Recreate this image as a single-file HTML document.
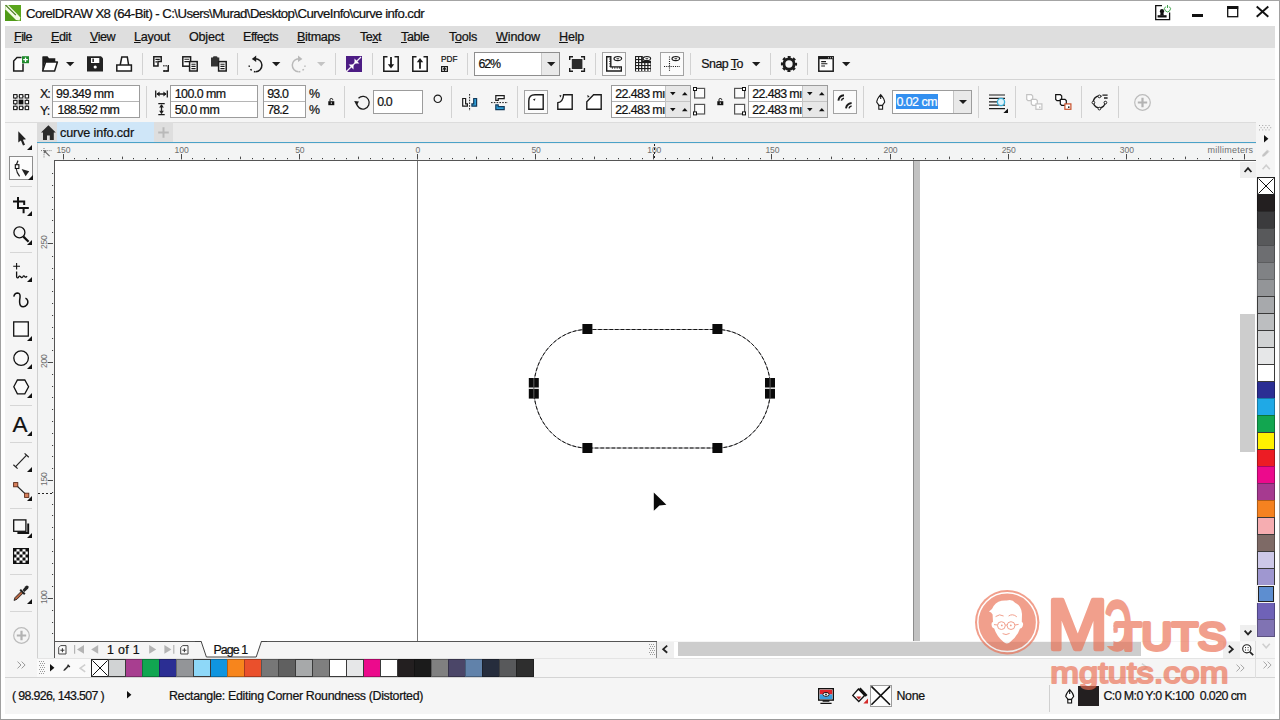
<!DOCTYPE html>
<html lang="en"><head><meta charset="utf-8"><title>CorelDRAW X8 (64-Bit) - curve info.cdr</title>
<style>
html,body{margin:0;padding:0;}
body{width:1280px;height:720px;overflow:hidden;background:#fff;position:relative;font-family:"Liberation Sans",sans-serif;}
.a{position:absolute;box-sizing:border-box;}
.t{white-space:pre;line-height:1.2;-webkit-text-stroke:0.22px currentColor;}
u{text-decoration:underline;text-underline-offset:1px;}
svg{overflow:visible;}
</style></head><body>
<div class="a" style="left:0px;top:0px;width:1280px;height:720px;background:#fff;border:1px solid #a0a0a0;"></div><div class="a" style="left:0px;top:0px;width:1280px;height:1.3px;background:#a4a4a4;"></div><div class="a" style="left:0px;top:718.5px;width:1280px;height:1.5px;background:#9a9a9a;"></div><svg class="a" style="left:5px;top:5px;" width="16" height="16" viewBox="0 0 16 16"><rect width="16" height="16" fill="#5aa51c"/>
<path d="M0 5.5 L0 16 L13.5 16 Z" fill="#4f9a17"/>
<path d="M0.3 0.3 L3.5 0.3 L15.4 12.2 L14.6 15.4 L11 15 L0.3 4.2 Z" fill="#f3fae6"/>
<path d="M0.6 0.2 L10.8 10.2" stroke="#3c6f14" stroke-width="1.1" fill="none"/>
<path d="M5 0 L16 0 L16 12.5 L15.2 12 Z" fill="#5aa51c"/></svg><span class="a t" style="left:26px;top:5.5px;font-size:13.2px;color:#111;letter-spacing:-0.560px;">CorelDRAW X8 (64-Bit) - C:\Users\Murad\Desktop\CurveInfo\curve info.cdr</span><div class="a" style="left:5px;top:26px;width:1270px;height:22px;background:#dedede;"></div><span class="a t" style="left:14px;top:30.1px;font-size:12.6px;color:#111;letter-spacing:-0.578px;"><u>F</u>ile</span><span class="a t" style="left:51px;top:30.1px;font-size:12.6px;color:#111;letter-spacing:-0.430px;"><u>E</u>dit</span><span class="a t" style="left:90px;top:30.1px;font-size:12.6px;color:#111;letter-spacing:-0.523px;"><u>V</u>iew</span><span class="a t" style="left:134px;top:30.1px;font-size:12.6px;color:#111;letter-spacing:-0.305px;"><u>L</u>ayout</span><span class="a t" style="left:189px;top:30.1px;font-size:12.6px;color:#111;letter-spacing:-0.240px;">Ob<u>j</u>ect</span><span class="a t" style="left:243px;top:30.1px;font-size:12.6px;color:#111;letter-spacing:-0.469px;">Effe<u>c</u>ts</span><span class="a t" style="left:297px;top:30.1px;font-size:12.6px;color:#111;letter-spacing:-0.357px;"><u>B</u>itmaps</span><span class="a t" style="left:360px;top:30.1px;font-size:12.6px;color:#111;letter-spacing:-0.527px;">Te<u>x</u>t</span><span class="a t" style="left:401px;top:30.1px;font-size:12.6px;color:#111;letter-spacing:-0.422px;"><u>T</u>able</span><span class="a t" style="left:449px;top:30.1px;font-size:12.6px;color:#111;letter-spacing:-0.284px;">T<u>o</u>ols</span><span class="a t" style="left:496px;top:30.1px;font-size:12.6px;color:#111;letter-spacing:-0.133px;"><u>W</u>indow</span><span class="a t" style="left:559px;top:30.1px;font-size:12.6px;color:#111;letter-spacing:-0.230px;"><u>H</u>elp</span><div class="a" style="left:5px;top:48px;width:1270px;height:32px;background:#f5f5f5;"></div><div class="a" style="left:5px;top:79px;width:1270px;height:1px;background:#d4d4d4;"></div><div class="a" style="left:5px;top:80px;width:1270px;height:42px;background:#f5f5f5;"></div><div class="a" style="left:5px;top:122px;width:1270px;height:22px;background:#ebebeb;"></div><div class="a" style="left:5px;top:122px;width:1270px;height:1px;background:#dcdcdc;"></div><div class="a" style="left:5px;top:123px;width:33px;height:555px;background:#f5f5f5;"></div><div class="a" style="left:37px;top:123px;width:1px;height:555px;background:#d0d0d0;"></div><div class="a" style="left:56.5px;top:122.4px;width:97px;height:20px;background:#cfe6f8;"></div><div class="a" style="left:153.5px;top:122.4px;width:19px;height:20px;background:#dedede;"></div><div class="a" style="left:37px;top:142px;width:1219px;height:1.3px;background:#4aa2c8;"></div><span class="a t" style="left:60px;top:125.9px;font-size:12.6px;color:#111;letter-spacing:-0.114px;">curve info.cdr</span><div class="a" style="left:38px;top:143.5px;width:1218.3px;height:16.5px;background:#f3f4f4;"></div><div class="a" style="left:38px;top:160px;width:16px;height:481px;background:#f3f4f4;"></div><div class="a" style="left:54px;top:160px;width:1202.3px;height:1px;background:#555;"></div><div class="a" style="left:54px;top:160px;width:1px;height:498px;background:#555;"></div><div class="a" style="left:55px;top:161px;width:1200px;height:480px;background:#fff;"></div><div class="a" style="left:417px;top:161px;width:1px;height:480px;background:#777;"></div><div class="a" style="left:913px;top:161px;width:7px;height:480px;background:#c2c2c2;"></div><div class="a" style="left:913px;top:161px;width:1px;height:480px;background:#8c8c8c;"></div><div class="a" style="left:1256.3px;top:122px;width:18.7px;height:556px;background:#f5f5f5;"></div><div class="a" style="left:55px;top:641px;width:1200px;height:17px;background:#f5f5f5;"></div><div class="a" style="left:54px;top:641px;width:603px;height:1px;background:#555;"></div><div class="a" style="left:38px;top:658px;width:1237px;height:19px;background:#f5f5f5;"></div><div class="a" style="left:5px;top:677px;width:1270px;height:1px;background:#d4d4d4;"></div><div class="a" style="left:5px;top:678px;width:1270px;height:36.4px;background:#f5f5f5;"></div><span class="a t" style="left:12px;top:689.4px;font-size:12.4px;color:#111;letter-spacing:-0.669px;">( 98.926, 143.507 )</span><span class="a t" style="left:169px;top:689.4px;font-size:12.4px;color:#111;letter-spacing:-0.325px;">Rectangle: Editing Corner Roundness (Distorted)</span><span class="a t" style="left:896.4px;top:689.2px;font-size:12.4px;color:#111;letter-spacing:-0.256px;">None</span><span class="a t" style="left:1103.4px;top:689.2px;font-size:12.4px;color:#111;letter-spacing:-0.577px;">C:0 M:0 Y:0 K:100  0.020 cm</span><svg class="a" style="left:12px;top:56px;" width="16" height="16" viewBox="0 0 16 16"><path d="M9.5 1.6 L5 1.6 L1.7 5 L1.7 15 L11 15 L11 7.5" fill="#fff" stroke="#1c1c1c" stroke-width="1.5"/><rect x="10" y="0.2" width="7" height="7" fill="#1f8b2c"/><path d="M13.5 1.5 V6 M11.2 3.7 H15.8" stroke="#fff" stroke-width="1.3"/></svg><svg class="a" style="left:42px;top:56px;" width="16" height="16" viewBox="0 0 16 16"><path d="M0.3 15 L0.3 1 Q0.3 0.3 1 0.3 L5.5 0.3 L7 2.3 L13.3 2.3 L13.3 6 L3 6 Z" fill="#1c1c1c"/><path d="M3.6 6 L15.4 6 L12.6 14.9 L0.6 14.9 Z" fill="#fff" stroke="#1c1c1c" stroke-width="1.5" stroke-linejoin="round"/></svg><svg class="a" style="left:66px;top:62px;" width="8.4" height="4.2" viewBox="0 0 8.4 4.2"><path d="M0 0 L8.4 0 L4.2 4.2 Z" fill="#1c1c1c"/></svg><svg class="a" style="left:87px;top:56px;" width="16" height="16" viewBox="0 0 16 16"><path d="M0 0.3 H14 L16 2.3 V15.6 H0 Z" fill="#222"/><rect x="4" y="2" width="8.3" height="5" fill="#fff"/><rect x="5.4" y="2.6" width="1.5" height="3.4" fill="#222"/><circle cx="8.2" cy="11" r="1.6" fill="#fff"/></svg><svg class="a" style="left:116px;top:56px;" width="16" height="16" viewBox="0 0 16 16"><path d="M4.2 9 L5.8 1 L11.3 1 L12.6 9" fill="#fff" stroke="#1c1c1c" stroke-width="1.5"/><rect x="0.8" y="9" width="14.6" height="6" fill="#fff" stroke="#1c1c1c" stroke-width="1.5"/></svg><div class="a" style="left:142px;top:53px;width:1px;height:22px;background:#d2d2d2;"></div><svg class="a" style="left:153px;top:56px;" width="16" height="16" viewBox="0 0 16 16"><path d="M0.8 0.8 H8.2 V5.5 H5 V10 H0.8 Z" fill="#fff" stroke="#1c1c1c" stroke-width="1.5"/><path d="M2.4 3.3 H6.8 M2.4 5.8 H4" stroke="#1c1c1c" stroke-width="1.3"/><path d="M10.3 9.8 H15.3 V15 H10.3" fill="none" stroke="#1c1c1c" stroke-width="1.4" stroke-dasharray="1.2 1"/><path d="M15.3 10 V15 H10" fill="none" stroke="#1c1c1c" stroke-width="1.4"/></svg><svg class="a" style="left:182px;top:56px;" width="16" height="16" viewBox="0 0 16 16"><rect x="0.8" y="0.8" width="7.8" height="9.4" fill="#fff" stroke="#1c1c1c" stroke-width="1.5"/><path d="M2.4 3.2 H7.2 M2.4 5.6 H7.2" stroke="#1c1c1c" stroke-width="1.1"/><rect x="7.6" y="5.6" width="7.6" height="9.4" fill="#fff" stroke="#1c1c1c" stroke-width="1.5"/><path d="M9.4 8.2 H13.6 M9.4 10.4 H13.6 M9.4 12.6 H13.6" stroke="#1c1c1c" stroke-width="1.1"/></svg><svg class="a" style="left:211px;top:56px;" width="16" height="16" viewBox="0 0 16 16"><path d="M0 1.6 H1.8 Q2 0.2 3.2 0.2 H5.2 Q6.4 0.2 6.6 1.6 H8.3 V10.4 H0 Z" fill="#333"/><rect x="7.6" y="5.6" width="7.6" height="9.4" fill="#fff" stroke="#1c1c1c" stroke-width="1.5"/><path d="M9.4 8.2 H13.6 M9.4 10.4 H13.6 M9.4 12.6 H13.6" stroke="#1c1c1c" stroke-width="1.1"/></svg><div class="a" style="left:237px;top:53px;width:1px;height:22px;background:#d2d2d2;"></div><svg class="a" style="left:247px;top:56px;" width="16" height="16" viewBox="0 0 16 16"><path d="M8.2 2.8 A6.5 6.5 0 1 1 8.6 15.8" fill="none" stroke="#1c1c1c" stroke-width="1.5"/><path d="M8.4 15.8 A6.5 6.5 0 0 1 2.2 9.4" fill="none" stroke="#1c1c1c" stroke-width="1.5" stroke-dasharray="1.6 2.4"/><path d="M4.8 3 L9.2 -0.4 L9.2 6 Z" fill="#1c1c1c"/></svg><svg class="a" style="left:272px;top:62px;" width="8.4" height="4.2" viewBox="0 0 8.4 4.2"><path d="M0 0 L8.4 0 L4.2 4.2 Z" fill="#1c1c1c"/></svg><svg class="a" style="left:291px;top:56px;" width="16" height="16" viewBox="0 0 16 16"><path d="M8 2.8 A6.5 6.5 0 1 0 7.6 15.8" fill="none" stroke="#b9b9b9" stroke-width="1.5"/><path d="M7.8 15.8 A6.5 6.5 0 0 0 14 9.4" fill="none" stroke="#b9b9b9" stroke-width="1.5" stroke-dasharray="1.6 2.4"/><path d="M11.4 3 L7 -0.4 L7 6 Z" fill="#b9b9b9"/></svg><svg class="a" style="left:317px;top:62px;" width="8.4" height="4.2" viewBox="0 0 8.4 4.2"><path d="M0 0 L8.4 0 L4.2 4.2 Z" fill="#c4c4c4"/></svg><div class="a" style="left:335px;top:53px;width:1px;height:22px;background:#d2d2d2;"></div><svg class="a" style="left:346px;top:56px;" width="16" height="16" viewBox="0 0 16 16"><path d="M0 0 H16 V16 H2 L0 14 Z" fill="#4c1c84"/><path d="M1 15 L15 1" stroke="#f0eaf6" stroke-width="1.3"/><path d="M8.5 7.5 L8.5 2.6 L13.4 7.5 Z M7.5 8.5 L2.6 8.5 L7.5 13.4 Z" fill="#fff"/></svg><div class="a" style="left:372px;top:53px;width:1px;height:22px;background:#d2d2d2;"></div><svg class="a" style="left:383px;top:56px;" width="16" height="16" viewBox="0 0 16 16"><path d="M4.5 0.8 H0.8 V15.2 H15.2 V0.8 H11.5" fill="#fff" stroke="#1c1c1c" stroke-width="1.5"/><path d="M8 1 V9.5" stroke="#1c1c1c" stroke-width="1.8"/><path d="M4.8 8.3 H11.2 L8 12.6 Z" fill="#1c1c1c"/></svg><svg class="a" style="left:412px;top:56px;" width="16" height="16" viewBox="0 0 16 16"><path d="M4.5 0.8 H0.8 V15.2 H15.2 V0.8 H11.5" fill="#fff" stroke="#1c1c1c" stroke-width="1.5"/><path d="M8 12.8 V5" stroke="#1c1c1c" stroke-width="1.8"/><path d="M4.8 6.3 H11.2 L8 2 Z" fill="#1c1c1c"/></svg><span class="a t" style="left:441px;top:55.2px;font-size:8.2px;color:#111;letter-spacing:0.042px;">PDF</span><svg class="a" style="left:441px;top:66px;" width="7" height="6" viewBox="0 0 7 6"><rect x="0.6" y="0.6" width="5.8" height="4.8" fill="#fff" stroke="#1c1c1c" stroke-width="1.2"/><path d="M3.5 5.4 V2.4 M1.8 3.6 L3.5 1.6 L5.2 3.6" stroke="#1c1c1c" stroke-width="1.1" fill="none"/></svg><div class="a" style="left:467px;top:53px;width:1px;height:22px;background:#d2d2d2;"></div><div class="a" style="left:474px;top:52px;width:86px;height:24px;background:#fff;border:1px solid #8e8e8e;"></div><div class="a" style="left:541px;top:53px;width:18px;height:22px;background:#e9e9e9;"></div><div class="a" style="left:540.5px;top:53px;width:1px;height:22px;background:#c9c9c9;"></div><svg class="a" style="left:546.8px;top:62px;" width="8.4" height="4.2" viewBox="0 0 8.4 4.2"><path d="M0 0 L8.4 0 L4.2 4.2 Z" fill="#1c1c1c"/></svg><span class="a t" style="left:478.5px;top:56.6px;font-size:12.4px;color:#111;letter-spacing:-1.104px;">62%</span><svg class="a" style="left:569px;top:56px;" width="16" height="16" viewBox="0 0 16 16"><rect x="2.8" y="3" width="10.6" height="10" fill="#2b2b2b"/><path d="M0.7 4 V0.8 H4 M12 0.8 H15.4 V4 M15.4 12 V15.3 H12 M4 15.3 H0.7 V12" fill="none" stroke="#1c1c1c" stroke-width="1.4"/></svg><div class="a" style="left:595px;top:53px;width:1px;height:22px;background:#d2d2d2;"></div><div class="a" style="left:602px;top:52px;width:24px;height:24px;background:#fbfbfb;border:1px solid #a3a3a3;"></div><svg class="a" style="left:606px;top:56px;" width="16" height="16" viewBox="0 0 16 16"><path d="M0.7 0.7 H4.8 V10.9 H15.3 V15 H0.7 Z" fill="#fff" stroke="#1c1c1c" stroke-width="1.4"/><path d="M3 3 H4.6 M3 5.4 H4.6 M3 7.8 H4.6 M3 10.2 H4.6 M6.4 12.8 V11 M8.8 12.8 V11 M11.2 12.8 V11 M13.4 12.8 V11" stroke="#1c1c1c" stroke-width="0.8"/><ellipse cx="11.8" cy="2.6" rx="3.8" ry="2.1" fill="#fff" stroke="#1c1c1c" stroke-width="1.2"/><ellipse cx="11.8" cy="2.6" rx="1.5" ry="0.9" fill="#555"/></svg><svg class="a" style="left:635px;top:56px;" width="16" height="16" viewBox="0 0 16 16"><path d="M0 0 H7.8 V4.8 H16 V15.6 H0 Z" fill="#1e1e1e"/><rect x="1.1" y="1.1" width="1.9" height="1.9" fill="#fff"/><rect x="1.1" y="4.1" width="1.9" height="1.9" fill="#fff"/><rect x="1.1" y="7.1" width="1.9" height="1.9" fill="#fff"/><rect x="1.1" y="10.1" width="1.9" height="1.9" fill="#fff"/><rect x="1.1" y="13.1" width="1.9" height="1.9" fill="#fff"/><rect x="4.2" y="1.1" width="1.9" height="1.9" fill="#fff"/><rect x="4.2" y="4.1" width="1.9" height="1.9" fill="#fff"/><rect x="4.2" y="7.1" width="1.9" height="1.9" fill="#fff"/><rect x="4.2" y="10.1" width="1.9" height="1.9" fill="#fff"/><rect x="4.2" y="13.1" width="1.9" height="1.9" fill="#fff"/><rect x="7.3" y="7.1" width="1.9" height="1.9" fill="#fff"/><rect x="7.3" y="10.1" width="1.9" height="1.9" fill="#fff"/><rect x="7.3" y="13.1" width="1.9" height="1.9" fill="#fff"/><rect x="10.4" y="7.1" width="1.9" height="1.9" fill="#fff"/><rect x="10.4" y="10.1" width="1.9" height="1.9" fill="#fff"/><rect x="10.4" y="13.1" width="1.9" height="1.9" fill="#fff"/><rect x="13.5" y="7.1" width="1.9" height="1.9" fill="#fff"/><rect x="13.5" y="10.1" width="1.9" height="1.9" fill="#fff"/><rect x="13.5" y="13.1" width="1.9" height="1.9" fill="#fff"/><ellipse cx="11.8" cy="2.6" rx="3.8" ry="2.1" fill="#fff" stroke="#1c1c1c" stroke-width="1.2"/><ellipse cx="11.8" cy="2.6" rx="1.5" ry="0.9" fill="#555"/></svg><div class="a" style="left:660px;top:52px;width:24px;height:24px;background:#fbfbfb;border:1px solid #a3a3a3;"></div><svg class="a" style="left:664px;top:56px;" width="16" height="16" viewBox="0 0 16 16"><path d="M5.5 0.5 V15.5 M0 10.5 H16" stroke="#1c1c1c" stroke-width="1.1" stroke-dasharray="1.1 1.1" fill="none"/><ellipse cx="11.8" cy="2.6" rx="3.8" ry="2.1" fill="#fff" stroke="#1c1c1c" stroke-width="1.2"/><ellipse cx="11.8" cy="2.6" rx="1.5" ry="0.9" fill="#555"/></svg><div class="a" style="left:690px;top:53px;width:1px;height:22px;background:#d2d2d2;"></div><span class="a t" style="left:701.3px;top:57.4px;font-size:12.4px;color:#111;letter-spacing:-0.538px;">Snap <u>T</u>o</span><svg class="a" style="left:751.8px;top:62px;" width="8.4" height="4.2" viewBox="0 0 8.4 4.2"><path d="M0 0 L8.4 0 L4.2 4.2 Z" fill="#1c1c1c"/></svg><div class="a" style="left:770px;top:53px;width:1px;height:22px;background:#d2d2d2;"></div><svg class="a" style="left:781px;top:56px;" width="16" height="16" viewBox="0 0 16 16"><circle cx="8" cy="8" r="5.1" fill="none" stroke="#1c1c1c" stroke-width="2.9"/><circle cx="8" cy="8" r="6.9" fill="none" stroke="#1c1c1c" stroke-width="2.4" stroke-dasharray="2.9 2.52" stroke-dashoffset="1.45"/></svg><div class="a" style="left:807px;top:53px;width:1px;height:22px;background:#d2d2d2;"></div><svg class="a" style="left:818px;top:56px;" width="16" height="16" viewBox="0 0 16 16"><rect x="0.8" y="0.8" width="14.4" height="14.4" fill="#fff" stroke="#1c1c1c" stroke-width="1.5"/><rect x="0.8" y="0.8" width="14.4" height="2.4" fill="#1c1c1c"/><path d="M10 1.8 H11 M12 1.8 H13 M14 1.8 H15" stroke="#fff" stroke-width="0.8"/><path d="M3.2 5.6 H8 M3.2 7.8 H9.4 M3.2 10 H7" stroke="#1c1c1c" stroke-width="1.1"/></svg><svg class="a" style="left:841.8px;top:62px;" width="8.4" height="4.2" viewBox="0 0 8.4 4.2"><path d="M0 0 L8.4 0 L4.2 4.2 Z" fill="#1c1c1c"/></svg><svg class="a" style="left:13px;top:94px;" width="16" height="16" viewBox="0 0 16 16"><rect x="2.3" y="2.3" width="11.6" height="11.6" fill="none" stroke="#1c1c1c" stroke-width="1.1" stroke-dasharray="1 1"/><rect x="0.6" y="0.6" width="3.4" height="3.4" fill="#fff" stroke="#1c1c1c" stroke-width="1.1"/><rect x="0.6" y="6.4" width="3.4" height="3.4" fill="#fff" stroke="#1c1c1c" stroke-width="1.1"/><rect x="0.6" y="12.2" width="3.4" height="3.4" fill="#fff" stroke="#1c1c1c" stroke-width="1.1"/><rect x="6.4" y="0.6" width="3.4" height="3.4" fill="#fff" stroke="#1c1c1c" stroke-width="1.1"/><rect x="6.4" y="12.2" width="3.4" height="3.4" fill="#fff" stroke="#1c1c1c" stroke-width="1.1"/><rect x="12.2" y="0.6" width="3.4" height="3.4" fill="#fff" stroke="#1c1c1c" stroke-width="1.1"/><rect x="12.2" y="6.4" width="3.4" height="3.4" fill="#fff" stroke="#1c1c1c" stroke-width="1.1"/><rect x="12.2" y="12.2" width="3.4" height="3.4" fill="#fff" stroke="#1c1c1c" stroke-width="1.1"/><rect x="5.6" y="5.6" width="4.8" height="4.8" fill="#111"/></svg><span class="a t" style="left:40px;top:87.3px;font-size:12.6px;color:#111;letter-spacing:-1.203px;">X:</span><span class="a t" style="left:40px;top:103.5px;font-size:12.6px;color:#111;letter-spacing:-0.859px;">Y:</span><div class="a" style="left:52px;top:85px;width:88px;height:33px;background:#fff;border:1px solid #9c9c9c;"></div><div class="a" style="left:53px;top:101px;width:86px;height:1px;background:#b5b5b5;"></div><span class="a t" style="left:56px;top:86.9px;font-size:12.4px;color:#111;letter-spacing:-0.498px;">99.349 mm</span><span class="a t" style="left:57.5px;top:103.3px;font-size:12.4px;color:#111;letter-spacing:-0.727px;">188.592 mm</span><div class="a" style="left:146px;top:86px;width:1px;height:32px;background:#d2d2d2;"></div><svg class="a" style="left:155px;top:90px;" width="13" height="8" viewBox="0 0 13 8"><path d="M0.7 0.5 V7.5 M12.3 0.5 V7.5 M2 4 H11" stroke="#1c1c1c" stroke-width="1.3" fill="none"/><path d="M1.4 4 L4.6 1.6 V6.4 Z M11.6 4 L8.4 1.6 V6.4 Z" fill="#1c1c1c"/></svg><svg class="a" style="left:158px;top:103.4px;" width="7" height="12.4" viewBox="0 0 7 12.4"><path d="M0.3 0.7 H6.7 M0.3 11.7 H6.7 M3.5 2 V10.4" stroke="#1c1c1c" stroke-width="1.3" fill="none"/><path d="M3.5 1.3 L1.1 4.6 H5.9 Z M3.5 11.1 L1.1 7.8 H5.9 Z" fill="#1c1c1c"/></svg><div class="a" style="left:170px;top:85px;width:88px;height:33px;background:#fff;border:1px solid #9c9c9c;"></div><div class="a" style="left:171px;top:101px;width:86px;height:1px;background:#b5b5b5;"></div><span class="a t" style="left:174.7px;top:86.9px;font-size:12.4px;color:#111;letter-spacing:-0.537px;">100.0 mm</span><span class="a t" style="left:174.7px;top:103.3px;font-size:12.4px;color:#111;letter-spacing:-0.529px;">50.0 mm</span><div class="a" style="left:263px;top:85px;width:43px;height:33px;background:#fff;border:1px solid #9c9c9c;"></div><div class="a" style="left:264px;top:101px;width:41px;height:1px;background:#b5b5b5;"></div><span class="a t" style="left:267.2px;top:86.9px;font-size:12.4px;color:#111;letter-spacing:-0.831px;">93.0</span><span class="a t" style="left:267.2px;top:103.3px;font-size:12.4px;color:#111;letter-spacing:-0.831px;">78.2</span><span class="a t" style="left:309px;top:86.9px;font-size:12.4px;color:#111;letter-spacing:-2.631px;">%</span><span class="a t" style="left:309px;top:103.3px;font-size:12.4px;color:#111;letter-spacing:-2.631px;">%</span><svg class="a" style="left:328.3px;top:98px;" width="7" height="7.5" viewBox="0 0 7 7.5"><rect x="0.3" y="3.2" width="6" height="4" fill="#111"/><path d="M2 3.2 V1.6 Q2 0.5 3.3 0.5 Q4.7 0.5 4.7 1.6 V2.2" fill="none" stroke="#111" stroke-width="1"/><rect x="2.8" y="4.4" width="1" height="1.4" fill="#fff"/></svg><div class="a" style="left:344px;top:86px;width:1px;height:32px;background:#d2d2d2;"></div><svg class="a" style="left:354px;top:95px;" width="17" height="15" viewBox="0 0 17 15"><path d="M2.6 8 A6.3 6.3 0 1 0 4.5 3.2" fill="none" stroke="#1c1c1c" stroke-width="1.3"/><path d="M0.2 6 L5 6.6 L2.4 10.4 Z" fill="#1c1c1c"/></svg><div class="a" style="left:373px;top:90px;width:50px;height:24px;background:#fff;border:1px solid #9c9c9c;"></div><span class="a t" style="left:377.2px;top:94.5px;font-size:12.4px;color:#111;letter-spacing:-0.845px;">0.0</span><svg class="a" style="left:432.5px;top:94px;" width="10" height="10" viewBox="0 0 10 10"><circle cx="4.8" cy="4.8" r="3.7" fill="none" stroke="#1c1c1c" stroke-width="1.2"/></svg><div class="a" style="left:451px;top:86px;width:1px;height:32px;background:#d2d2d2;"></div><svg class="a" style="left:462px;top:93.5px;" width="16" height="17" viewBox="0 0 16 17"><path d="M0.7 4.5 H3.6 V9.8 H5.4 V12.2 H0.7 Z" fill="#fff" stroke="#1c1c1c" stroke-width="1.2"/><path d="M14.6 4.5 H11.7 V9.8 H9.9 V12.2 H14.6 Z" fill="#2f9fd8" stroke="#143a5a" stroke-width="1.2"/><path d="M7.6 0 V17" stroke="#1c1c1c" stroke-width="1" stroke-dasharray="1.6 1.2"/></svg><svg class="a" style="left:490.5px;top:94.5px;" width="17" height="16" viewBox="0 0 17 16"><path d="M4.8 0.7 H13.2 V3.6 H7.2 V5.4 H4.8 Z" fill="#fff" stroke="#1c1c1c" stroke-width="1.2"/><path d="M4.8 14.6 H13.2 V11.7 H7.2 V9.9 H4.8 Z" fill="#2f9fd8" stroke="#143a5a" stroke-width="1.2"/><path d="M0 7.6 H17" stroke="#1c1c1c" stroke-width="1" stroke-dasharray="1.6 1.2"/></svg><div class="a" style="left:517px;top:86px;width:1px;height:32px;background:#d2d2d2;"></div><div class="a" style="left:524px;top:90px;width:24px;height:24px;background:#fbfbfb;border:1px solid #a3a3a3;"></div><svg class="a" style="left:528px;top:94px;" width="16" height="16" viewBox="0 0 16 16"><path d="M0.8 15.2 V7 Q0.8 0.8 7 0.8 H15.2 V15.2 Z" fill="#fff" stroke="#1c1c1c" stroke-width="1.4"/><path d="M5 5.2 L7.6 4.6 L6.4 7 Z" fill="#1c1c1c"/></svg><svg class="a" style="left:557px;top:94px;" width="16" height="16" viewBox="0 0 16 16"><path d="M0.8 15.2 V8.8 Q6 8 6.6 0.8 H15.2 V15.2 Z" fill="#fff" stroke="#1c1c1c" stroke-width="1.4"/><path d="M2.2 1.6 L4.4 1 L3.6 3.4 Z" fill="#1c1c1c"/></svg><svg class="a" style="left:586px;top:94px;" width="16" height="16" viewBox="0 0 16 16"><path d="M0.8 15.2 V7.8 L7.6 0.8 H15.2 V15.2 Z" fill="#fff" stroke="#1c1c1c" stroke-width="1.4"/><path d="M1.2 1 L3.6 2.2 L1.8 3.8 Z" fill="#1c1c1c"/></svg><div class="a" style="left:611px;top:85px;width:80px;height:33px;background:#fff;border:1px solid #9c9c9c;"></div><div class="a" style="left:612px;top:101px;width:78px;height:1px;background:#b5b5b5;"></div><div class="a" style="left:666px;top:86px;width:24px;height:31px;background:#e7e7e7;"></div><div class="a" style="left:666px;top:101px;width:24px;height:1px;background:#c4c4c4;"></div><div class="a" style="left:665px;top:86px;width:1px;height:31px;background:#c4c4c4;"></div><span class="a t" style="left:615.3px;top:86.9px;font-size:12.4px;color:#111;letter-spacing:-0.623px;">22.483 mı</span><span class="a t" style="left:615.3px;top:103.3px;font-size:12.4px;color:#111;letter-spacing:-0.623px;">22.483 mı</span><svg class="a" style="left:670.4px;top:91.9px;" width="5.6" height="3.2" viewBox="0 0 5.6 3.2"><path d="M0 0 H5.6 L2.8 3.2 Z" fill="#111"/></svg><svg class="a" style="left:682.2px;top:91.9px;" width="5.6" height="3.2" viewBox="0 0 5.6 3.2"><path d="M0 3.2 H5.6 L2.8 0 Z" fill="#111"/></svg><svg class="a" style="left:670.4px;top:107.7px;" width="5.6" height="3.2" viewBox="0 0 5.6 3.2"><path d="M0 0 H5.6 L2.8 3.2 Z" fill="#111"/></svg><svg class="a" style="left:682.2px;top:107.7px;" width="5.6" height="3.2" viewBox="0 0 5.6 3.2"><path d="M0 3.2 H5.6 L2.8 0 Z" fill="#111"/></svg><svg class="a" style="left:692.6px;top:87.3px;" width="13" height="12.4" viewBox="0 0 13 12.4"><rect x="1.6" y="1.4" width="10" height="9.6" fill="#fbfbfb" stroke="#555" stroke-width="1.2"/><rect x="0.5" y="0.5" width="3" height="3" fill="#fff" stroke="#111" stroke-width="1"/></svg><svg class="a" style="left:692.6px;top:103.2px;" width="13" height="12.4" viewBox="0 0 13 12.4"><rect x="1.6" y="1.4" width="10" height="9.6" fill="#fbfbfb" stroke="#555" stroke-width="1.2"/><rect x="0.5" y="8.9" width="3" height="3" fill="#fff" stroke="#111" stroke-width="1"/></svg><svg class="a" style="left:716.6px;top:98px;" width="7" height="7.5" viewBox="0 0 7 7.5"><rect x="0.3" y="3.2" width="6" height="4" fill="#111"/><path d="M2 3.2 V1.6 Q2 0.5 3.3 0.5 Q4.7 0.5 4.7 1.6 V2.2" fill="none" stroke="#111" stroke-width="1"/><rect x="2.8" y="4.4" width="1" height="1.4" fill="#fff"/></svg><svg class="a" style="left:733px;top:87.3px;" width="13" height="12.4" viewBox="0 0 13 12.4"><rect x="1.6" y="1.4" width="10" height="9.6" fill="#fbfbfb" stroke="#555" stroke-width="1.2"/><rect x="9.5" y="0.5" width="3" height="3" fill="#fff" stroke="#111" stroke-width="1"/></svg><svg class="a" style="left:733px;top:103.2px;" width="13" height="12.4" viewBox="0 0 13 12.4"><rect x="1.6" y="1.4" width="10" height="9.6" fill="#fbfbfb" stroke="#555" stroke-width="1.2"/><rect x="9.5" y="8.9" width="3" height="3" fill="#fff" stroke="#111" stroke-width="1"/></svg><div class="a" style="left:748px;top:85px;width:80px;height:33px;background:#fff;border:1px solid #9c9c9c;"></div><div class="a" style="left:749px;top:101px;width:78px;height:1px;background:#b5b5b5;"></div><div class="a" style="left:803px;top:86px;width:24px;height:31px;background:#e7e7e7;"></div><div class="a" style="left:803px;top:101px;width:24px;height:1px;background:#c4c4c4;"></div><div class="a" style="left:802px;top:86px;width:1px;height:31px;background:#c4c4c4;"></div><span class="a t" style="left:752.3px;top:86.9px;font-size:12.4px;color:#111;letter-spacing:-0.623px;">22.483 mı</span><span class="a t" style="left:752.3px;top:103.3px;font-size:12.4px;color:#111;letter-spacing:-0.623px;">22.483 mı</span><svg class="a" style="left:807px;top:91.9px;" width="5.6" height="3.2" viewBox="0 0 5.6 3.2"><path d="M0 0 H5.6 L2.8 3.2 Z" fill="#111"/></svg><svg class="a" style="left:818.8px;top:91.9px;" width="5.6" height="3.2" viewBox="0 0 5.6 3.2"><path d="M0 3.2 H5.6 L2.8 0 Z" fill="#111"/></svg><svg class="a" style="left:807px;top:107.7px;" width="5.6" height="3.2" viewBox="0 0 5.6 3.2"><path d="M0 0 H5.6 L2.8 3.2 Z" fill="#111"/></svg><svg class="a" style="left:818.8px;top:107.7px;" width="5.6" height="3.2" viewBox="0 0 5.6 3.2"><path d="M0 3.2 H5.6 L2.8 0 Z" fill="#111"/></svg><div class="a" style="left:833px;top:90px;width:24px;height:24px;background:#fbfbfb;border:1px solid #a3a3a3;"></div><svg class="a" style="left:837px;top:94px;" width="16" height="16" viewBox="0 0 16 16"><path d="M1.4 6.6 Q2 1.6 7 1.2" fill="none" stroke="#1c1c1c" stroke-width="1.9"/><path d="M4.4 6.6 Q4.8 4.4 7 4.2" fill="none" stroke="#1c1c1c" stroke-width="1.5"/><path d="M9 14.4 Q9.6 9.6 14.6 9" fill="none" stroke="#1c1c1c" stroke-width="1.9"/><path d="M12 14.4 Q12.4 12.2 14.6 12" fill="none" stroke="#1c1c1c" stroke-width="1.5"/></svg><div class="a" style="left:863px;top:86px;width:1px;height:32px;background:#d2d2d2;"></div><svg class="a" style="left:876px;top:94px;" width="9.4" height="16" viewBox="0 0 9.4 16"><path d="M4.7 0.4 V5 M4.7 0.6 Q1 4.6 0.7 8 L3 11.4 H6.4 L8.7 8 Q8.4 4.6 4.7 0.6 Z" fill="#fff" stroke="#1c1c1c" stroke-width="1.1"/><rect x="2.8" y="11.6" width="3.8" height="3.6" fill="#fff" stroke="#1c1c1c" stroke-width="1.1"/></svg><div class="a" style="left:892px;top:90px;width:80px;height:24px;background:#fff;border:1px solid #9c9c9c;"></div><div class="a" style="left:954px;top:91px;width:17px;height:22px;background:#e9e9e9;"></div><div class="a" style="left:953px;top:91px;width:1px;height:22px;background:#c4c4c4;"></div><div class="a" style="left:895.6px;top:94.4px;width:42.6px;height:14.6px;background:#3390f0;"></div><span class="a t" style="left:896.4px;top:95.2px;font-size:12.4px;color:#fff;letter-spacing:-0.497px;">0.02 cm</span><svg class="a" style="left:959.2px;top:100.2px;" width="8" height="4" viewBox="0 0 8 4"><path d="M0 0 L8 0 L4 4 Z" fill="#1c1c1c"/></svg><div class="a" style="left:978px;top:86px;width:1px;height:32px;background:#d2d2d2;"></div><svg class="a" style="left:989px;top:94px;" width="20" height="19" viewBox="0 0 20 19"><path d="M0 1 H16 M0 4.4 H16 M0 7.8 H16 M0 11.2 H16 M0 14.6 H16" stroke="#1c1c1c" stroke-width="1.2"/><circle cx="12" cy="8" r="3.6" fill="#dff3fb" stroke="#3bb0d8" stroke-width="1.3"/><path d="M19 14.4 V19 H14.4 Z" fill="#111"/></svg><div class="a" style="left:1015px;top:86px;width:1px;height:32px;background:#d2d2d2;"></div><svg class="a" style="left:1025.6px;top:94px;" width="17" height="16" viewBox="0 0 17 16"><path d="M0.7 0.7 H5.4 L6.7 2 V6.7 H2 L0.7 5.4 Z" fill="#fff" stroke="#c3c3c3" stroke-width="1.2"/><path d="M5.3 5.3 H10 L11.3 6.6 V11.3 H6.6 L5.3 10 Z" fill="#fff" stroke="#c3c3c3" stroke-width="1.2"/><rect x="9.9" y="9.9" width="6" height="5.4" fill="#fff" stroke="#c3c3c3" stroke-width="1.2"/><rect x="13" y="12.4" width="1.5" height="1.5" fill="#c3c3c3"/></svg><svg class="a" style="left:1055px;top:94px;" width="17" height="16" viewBox="0 0 17 16"><path d="M0.7 0.7 H5.4 L6.7 2 V6.7 H2 L0.7 5.4 Z" fill="#fff" stroke="#111" stroke-width="1.2"/><path d="M5.3 5.3 H10 L11.3 6.6 V11.3 H6.6 L5.3 10 Z" fill="#fff" stroke="#111" stroke-width="1.2"/><rect x="9.9" y="9.9" width="6" height="5.4" fill="#fff" stroke="#c8512b" stroke-width="1.2"/><rect x="13" y="12.4" width="1.5" height="1.5" fill="#111"/></svg><div class="a" style="left:1081px;top:86px;width:1px;height:32px;background:#d2d2d2;"></div><svg class="a" style="left:1092px;top:94px;" width="17" height="17" viewBox="0 0 17 17"><path d="M9.6 2.4 A6 6 0 1 0 13.3 7.6" fill="none" stroke="#1c1c1c" stroke-width="1.4"/><path d="M10.4 1.2 H15.6 M12 4 H15.6" stroke="#1c1c1c" stroke-width="1.3"/><circle cx="7.4" cy="2.4" r="1.35" fill="#fff" stroke="#1c1c1c" stroke-width="1"/><circle cx="1.4" cy="8.6" r="1.35" fill="#fff" stroke="#1c1c1c" stroke-width="1"/><circle cx="7.4" cy="14.6" r="1.35" fill="#fff" stroke="#1c1c1c" stroke-width="1"/><circle cx="13.4" cy="8.6" r="1.35" fill="#fff" stroke="#1c1c1c" stroke-width="1"/></svg><div class="a" style="left:1118px;top:86px;width:1px;height:32px;background:#d2d2d2;"></div><svg class="a" style="left:1133.5px;top:93.5px;" width="17" height="17" viewBox="0 0 17 17"><circle cx="8.5" cy="8.5" r="7.8" fill="none" stroke="#bcbcbc" stroke-width="1.2"/><path d="M8.5 3.8 V13.2 M3.8 8.5 H13.2" stroke="#b3b3b3" stroke-width="2.2"/></svg><svg class="a" style="left:1155px;top:5px;" width="16" height="15.5" viewBox="0 0 16 15.5"><path d="M7 0.7 H0.7 V14.6 H14.6 V7.5" fill="none" stroke="#111" stroke-width="1.3"/><circle cx="7" cy="6.2" r="2.1" fill="#111"/><path d="M5.6 7 H8.4 L8.8 10.4 H5.2 Z" fill="#111"/><rect x="2.6" y="10.2" width="9" height="2.3" fill="#111"/><path d="M10.7 1.6 A2.9 2.9 0 1 0 14.3 1.6" fill="none" stroke="#3fa34a" stroke-width="1"/><path d="M12.5 0 V3" stroke="#3fa34a" stroke-width="1"/></svg><div class="a" style="left:1192px;top:13.8px;width:11.3px;height:3.2px;background:#111;"></div><svg class="a" style="left:1227px;top:6px;" width="11.5" height="11.5" viewBox="0 0 11.5 11.5"><rect x="0.7" y="0.7" width="10" height="10" fill="none" stroke="#111" stroke-width="1.3"/><rect x="0.2" y="0.2" width="11" height="2.8" fill="#111"/></svg><svg class="a" style="left:1256px;top:6px;" width="13" height="11.5" viewBox="0 0 13 11.5"><path d="M0.7 0.5 L12.3 10.8 M12.3 0.5 L0.7 10.8" stroke="#111" stroke-width="1.9"/></svg><div class="a" style="left:37px;top:122.4px;width:19.5px;height:19.6px;background:#dcdcdc;"></div><svg class="a" style="left:41px;top:125px;" width="15" height="15" viewBox="0 0 15 15"><path d="M7.4 0.2 L14.8 7.6 H12.8 V15 H8.8 V10.6 H6 V15 H2 V7.6 H0 Z" fill="#2a2a2a"/></svg><svg class="a" style="left:158px;top:126.7px;" width="11" height="11" viewBox="0 0 11 11"><path d="M5.5 0.2 V10.8 M0.2 5.5 H10.8" stroke="#b9b9b9" stroke-width="2"/></svg><svg class="a" style="left:18px;top:131px;" width="8.5" height="16" viewBox="0 0 8.5 16"><path d="M0.3 0.2 V11.6 L2.9 9.4 L5 14.6 L7 13.7 L4.9 8.7 L8 8.3 Z" fill="#222"/></svg><svg class="a" style="left:27px;top:145px;" width="5" height="5" viewBox="0 0 5 5"><path d="M5 0 V5 H0 Z" fill="#111"/></svg><div class="a" style="left:9.4px;top:156.3px;width:23.4px;height:23.6px;background:#fcfcfc;border:1px solid #8d8d8d;"></div><svg class="a" style="left:14px;top:159.5px;" width="16" height="18" viewBox="0 0 16 18"><path d="M4 0.6 Q-0.4 8.5 5.6 16.4" fill="none" stroke="#222" stroke-width="1.2"/><rect x="1.3" y="4.7" width="3.6" height="3.8" fill="#fff" stroke="#111" stroke-width="1.1"/><path d="M7.6 9 L15.2 11.2 L11.6 16.2 Z" fill="#222"/></svg><svg class="a" style="left:27.5px;top:174.6px;" width="5" height="5" viewBox="0 0 5 5"><path d="M5 0 V5 H0 Z" fill="#111"/></svg><div class="a" style="left:10px;top:186px;width:22px;height:1px;background:#d6d6d6;"></div><svg class="a" style="left:13px;top:197px;" width="16" height="16.5" viewBox="0 0 16 16.5"><path d="M5 0 V9.4 M0 4.4 H11.2 V8 M15.8 11 H5 V7.6 M10.6 16.2 V11" fill="none" stroke="#111" stroke-width="2"/></svg><svg class="a" style="left:27px;top:211px;" width="5" height="5" viewBox="0 0 5 5"><path d="M5 0 V5 H0 Z" fill="#111"/></svg><svg class="a" style="left:12.5px;top:226px;" width="18" height="18" viewBox="0 0 18 18"><circle cx="6.4" cy="6.4" r="5.5" fill="none" stroke="#111" stroke-width="1.3"/><path d="M10.4 10.6 L15.6 15.8" stroke="#111" stroke-width="2.2"/></svg><svg class="a" style="left:27px;top:240.4px;" width="5" height="5" viewBox="0 0 5 5"><path d="M5 0 V5 H0 Z" fill="#111"/></svg><div class="a" style="left:10px;top:252px;width:22px;height:1px;background:#d6d6d6;"></div><svg class="a" style="left:13px;top:263px;" width="17" height="17" viewBox="0 0 17 17"><path d="M3.6 0 V6.6 M0.2 3.3 H7" stroke="#111" stroke-width="1.1"/><path d="M3.6 8.4 V13.4 Q3.8 15.6 5.4 14.4 Q6.4 12.2 7.6 13.6 Q8.6 15.4 9.8 13.8 Q10.8 12.2 11.8 13.6 Q12.8 15 14 13.2" fill="none" stroke="#111" stroke-width="1.3"/></svg><svg class="a" style="left:27px;top:277px;" width="5" height="5" viewBox="0 0 5 5"><path d="M5 0 V5 H0 Z" fill="#111"/></svg><svg class="a" style="left:13px;top:292px;" width="17" height="16" viewBox="0 0 17 16"><path d="M0.8 4.6 Q1.6 1 4.6 1 Q7.6 1.2 7 5.6 Q6 11 7.4 13.4 Q9.4 15.6 12.6 14 Q15.6 11.8 14.6 8.4 Q14 6.6 12.4 6.2" fill="none" stroke="#111" stroke-width="1.5"/></svg><svg class="a" style="left:13px;top:321px;" width="16" height="16" viewBox="0 0 16 16"><rect x="0.7" y="0.9" width="14.6" height="14.2" fill="#fafafa" stroke="#111" stroke-width="1.3"/></svg><svg class="a" style="left:27px;top:335.6px;" width="5" height="5" viewBox="0 0 5 5"><path d="M5 0 V5 H0 Z" fill="#111"/></svg><svg class="a" style="left:13px;top:350px;" width="16.4" height="16.4" viewBox="0 0 16.4 16.4"><circle cx="8.1" cy="8.1" r="7.3" fill="#fafafa" stroke="#111" stroke-width="1.3"/></svg><svg class="a" style="left:27px;top:364px;" width="5" height="5" viewBox="0 0 5 5"><path d="M5 0 V5 H0 Z" fill="#111"/></svg><svg class="a" style="left:13px;top:379px;" width="16.4" height="16" viewBox="0 0 16.4 16"><path d="M0.8 7.8 L4.4 1 H11.8 L15.6 7.8 L11.8 14.8 H4.4 Z" fill="#fafafa" stroke="#111" stroke-width="1.3"/></svg><svg class="a" style="left:27px;top:393px;" width="5" height="5" viewBox="0 0 5 5"><path d="M5 0 V5 H0 Z" fill="#111"/></svg><div class="a" style="left:10px;top:405px;width:22px;height:1px;background:#d6d6d6;"></div><span class="a t" style="left:12.6px;top:411.4px;font-size:22.5px;color:#111;letter-spacing:1.984px;">A</span><svg class="a" style="left:27px;top:431.4px;" width="5" height="5" viewBox="0 0 5 5"><path d="M5 0 V5 H0 Z" fill="#111"/></svg><div class="a" style="left:10px;top:442px;width:22px;height:1px;background:#d6d6d6;"></div><svg class="a" style="left:13px;top:453px;" width="16" height="16" viewBox="0 0 16 16"><path d="M2.6 13.6 L13.6 2.2" stroke="#222" stroke-width="1.2"/><path d="M0.4 11.8 L4.6 15.6 M11.6 0.4 L15.8 4.2" stroke="#222" stroke-width="1.2"/></svg><svg class="a" style="left:27px;top:467.4px;" width="5" height="5" viewBox="0 0 5 5"><path d="M5 0 V5 H0 Z" fill="#111"/></svg><svg class="a" style="left:13px;top:482px;" width="17" height="17" viewBox="0 0 17 17"><path d="M2.6 2.6 L13.8 13.4" stroke="#222" stroke-width="1.3"/><rect x="0.6" y="0.6" width="4.2" height="4.2" fill="#d9805c" stroke="#5a2a18" stroke-width="0.9"/><rect x="11.6" y="11.2" width="4.2" height="4.2" fill="#d9805c" stroke="#5a2a18" stroke-width="0.9"/></svg><svg class="a" style="left:27px;top:496px;" width="5" height="5" viewBox="0 0 5 5"><path d="M5 0 V5 H0 Z" fill="#111"/></svg><div class="a" style="left:10px;top:508px;width:22px;height:1px;background:#d6d6d6;"></div><svg class="a" style="left:13px;top:519px;" width="17" height="17" viewBox="0 0 17 17"><path d="M4.4 14 H15.2 V4.4" fill="none" stroke="#111" stroke-width="1.9"/><rect x="0.7" y="0.9" width="12.2" height="11.4" fill="#fafafa" stroke="#111" stroke-width="1.3"/></svg><svg class="a" style="left:27px;top:533.4px;" width="5" height="5" viewBox="0 0 5 5"><path d="M5 0 V5 H0 Z" fill="#111"/></svg><svg class="a" style="left:13px;top:548px;" width="16" height="16" viewBox="0 0 16 16"><rect x="0.6" y="0.6" width="14.8" height="14.8" fill="#fff" stroke="#111" stroke-width="1.2"/><rect x="0.5" y="0.5" width="3" height="3" fill="#111"/><rect x="0.5" y="6.5" width="3" height="3" fill="#111"/><rect x="0.5" y="12.5" width="3" height="3" fill="#111"/><rect x="3.5" y="3.5" width="3" height="3" fill="#111"/><rect x="3.5" y="9.5" width="3" height="3" fill="#111"/><rect x="6.5" y="0.5" width="3" height="3" fill="#111"/><rect x="6.5" y="6.5" width="3" height="3" fill="#111"/><rect x="6.5" y="12.5" width="3" height="3" fill="#111"/><rect x="9.5" y="3.5" width="3" height="3" fill="#111"/><rect x="9.5" y="9.5" width="3" height="3" fill="#111"/><rect x="12.5" y="0.5" width="3" height="3" fill="#111"/><rect x="12.5" y="6.5" width="3" height="3" fill="#111"/><rect x="12.5" y="12.5" width="3" height="3" fill="#111"/></svg><div class="a" style="left:10px;top:574px;width:22px;height:1px;background:#d6d6d6;"></div><svg class="a" style="left:13px;top:585px;" width="16" height="16.4" viewBox="0 0 16 16.4"><path d="M1 15.4 L2 12.6 L8.6 6 L10.4 7.8 L3.8 14.4 Z" fill="#b5633f" stroke="#222" stroke-width="0.9"/><path d="M7.2 4.6 L11.8 9.2" stroke="#222" stroke-width="2"/><path d="M9.6 5 L12.6 1.2 Q14 0 15.2 1.2 Q16.2 2.6 15 3.8 L11.4 7 Z" fill="#222"/></svg><svg class="a" style="left:27px;top:599.4px;" width="5" height="5" viewBox="0 0 5 5"><path d="M5 0 V5 H0 Z" fill="#111"/></svg><div class="a" style="left:10px;top:611px;width:22px;height:1px;background:#d6d6d6;"></div><svg class="a" style="left:13px;top:626.6px;" width="17" height="17" viewBox="0 0 17 17"><circle cx="8.5" cy="8.5" r="7.8" fill="none" stroke="#bcbcbc" stroke-width="1.2"/><path d="M8.5 3.8 V13.2 M3.8 8.5 H13.2" stroke="#b3b3b3" stroke-width="2.2"/></svg><svg class="a" style="left:16.5px;top:661.4px;" width="9" height="8" viewBox="0 0 9 8"><path d="M0.5 0.6 L4 4 L0.5 7.4 M4.6 0.6 L8.1 4 L4.6 7.4" fill="none" stroke="#9a9a9a" stroke-width="1"/></svg><svg class="a" style="left:41px;top:147.5px;" width="11" height="10" viewBox="0 0 11 10"><path d="M3 0 V10 M0 2.6 H11" stroke="#777" stroke-width="1" stroke-dasharray="1 1.1"/><path d="M3.4 3 L8.6 8.2" stroke="#666" stroke-width="1.1"/><path d="M2.6 2.2 L6 2.8 L3.2 5.6 Z" fill="#666"/></svg><svg class="a" style="left:38px;top:144px;" width="1217" height="16" viewBox="0 0 1217 16"><rect x="25" y="10" width="1" height="5.4" fill="#4a4a4a"/><rect x="36" y="14" width="1" height="1.2" fill="#3c3c3c"/><rect x="48" y="14" width="1" height="1.2" fill="#3c3c3c"/><rect x="60" y="14" width="1" height="1.2" fill="#3c3c3c"/><rect x="72" y="14" width="1" height="1.2" fill="#3c3c3c"/><rect x="84" y="12.6" width="1" height="2.6" fill="#4a4a4a"/><rect x="95" y="14" width="1" height="1.2" fill="#3c3c3c"/><rect x="107" y="14" width="1" height="1.2" fill="#3c3c3c"/><rect x="119" y="14" width="1" height="1.2" fill="#3c3c3c"/><rect x="131" y="14" width="1" height="1.2" fill="#3c3c3c"/><rect x="143" y="10" width="1" height="5.4" fill="#4a4a4a"/><rect x="154" y="14" width="1" height="1.2" fill="#3c3c3c"/><rect x="166" y="14" width="1" height="1.2" fill="#3c3c3c"/><rect x="178" y="14" width="1" height="1.2" fill="#3c3c3c"/><rect x="190" y="14" width="1" height="1.2" fill="#3c3c3c"/><rect x="202" y="12.6" width="1" height="2.6" fill="#4a4a4a"/><rect x="214" y="14" width="1" height="1.2" fill="#3c3c3c"/><rect x="225" y="14" width="1" height="1.2" fill="#3c3c3c"/><rect x="237" y="14" width="1" height="1.2" fill="#3c3c3c"/><rect x="249" y="14" width="1" height="1.2" fill="#3c3c3c"/><rect x="261" y="10" width="1" height="5.4" fill="#4a4a4a"/><rect x="273" y="14" width="1" height="1.2" fill="#3c3c3c"/><rect x="284" y="14" width="1" height="1.2" fill="#3c3c3c"/><rect x="296" y="14" width="1" height="1.2" fill="#3c3c3c"/><rect x="308" y="14" width="1" height="1.2" fill="#3c3c3c"/><rect x="320" y="12.6" width="1" height="2.6" fill="#4a4a4a"/><rect x="332" y="14" width="1" height="1.2" fill="#3c3c3c"/><rect x="344" y="14" width="1" height="1.2" fill="#3c3c3c"/><rect x="355" y="14" width="1" height="1.2" fill="#3c3c3c"/><rect x="367" y="14" width="1" height="1.2" fill="#3c3c3c"/><rect x="379" y="10" width="1" height="5.4" fill="#4a4a4a"/><rect x="391" y="14" width="1" height="1.2" fill="#3c3c3c"/><rect x="403" y="14" width="1" height="1.2" fill="#3c3c3c"/><rect x="414" y="14" width="1" height="1.2" fill="#3c3c3c"/><rect x="426" y="14" width="1" height="1.2" fill="#3c3c3c"/><rect x="438" y="12.6" width="1" height="2.6" fill="#4a4a4a"/><rect x="450" y="14" width="1" height="1.2" fill="#3c3c3c"/><rect x="462" y="14" width="1" height="1.2" fill="#3c3c3c"/><rect x="474" y="14" width="1" height="1.2" fill="#3c3c3c"/><rect x="485" y="14" width="1" height="1.2" fill="#3c3c3c"/><rect x="497" y="10" width="1" height="5.4" fill="#4a4a4a"/><rect x="509" y="14" width="1" height="1.2" fill="#3c3c3c"/><rect x="521" y="14" width="1" height="1.2" fill="#3c3c3c"/><rect x="533" y="14" width="1" height="1.2" fill="#3c3c3c"/><rect x="544" y="14" width="1" height="1.2" fill="#3c3c3c"/><rect x="556" y="12.6" width="1" height="2.6" fill="#4a4a4a"/><rect x="568" y="14" width="1" height="1.2" fill="#3c3c3c"/><rect x="580" y="14" width="1" height="1.2" fill="#3c3c3c"/><rect x="592" y="14" width="1" height="1.2" fill="#3c3c3c"/><rect x="604" y="14" width="1" height="1.2" fill="#3c3c3c"/><rect x="615" y="10" width="1" height="5.4" fill="#4a4a4a"/><rect x="627" y="14" width="1" height="1.2" fill="#3c3c3c"/><rect x="639" y="14" width="1" height="1.2" fill="#3c3c3c"/><rect x="651" y="14" width="1" height="1.2" fill="#3c3c3c"/><rect x="663" y="14" width="1" height="1.2" fill="#3c3c3c"/><rect x="674" y="12.6" width="1" height="2.6" fill="#4a4a4a"/><rect x="686" y="14" width="1" height="1.2" fill="#3c3c3c"/><rect x="698" y="14" width="1" height="1.2" fill="#3c3c3c"/><rect x="710" y="14" width="1" height="1.2" fill="#3c3c3c"/><rect x="722" y="14" width="1" height="1.2" fill="#3c3c3c"/><rect x="733" y="10" width="1" height="5.4" fill="#4a4a4a"/><rect x="745" y="14" width="1" height="1.2" fill="#3c3c3c"/><rect x="757" y="14" width="1" height="1.2" fill="#3c3c3c"/><rect x="769" y="14" width="1" height="1.2" fill="#3c3c3c"/><rect x="781" y="14" width="1" height="1.2" fill="#3c3c3c"/><rect x="793" y="12.6" width="1" height="2.6" fill="#4a4a4a"/><rect x="804" y="14" width="1" height="1.2" fill="#3c3c3c"/><rect x="816" y="14" width="1" height="1.2" fill="#3c3c3c"/><rect x="828" y="14" width="1" height="1.2" fill="#3c3c3c"/><rect x="840" y="14" width="1" height="1.2" fill="#3c3c3c"/><rect x="852" y="10" width="1" height="5.4" fill="#4a4a4a"/><rect x="863" y="14" width="1" height="1.2" fill="#3c3c3c"/><rect x="875" y="14" width="1" height="1.2" fill="#3c3c3c"/><rect x="887" y="14" width="1" height="1.2" fill="#3c3c3c"/><rect x="899" y="14" width="1" height="1.2" fill="#3c3c3c"/><rect x="911" y="12.6" width="1" height="2.6" fill="#4a4a4a"/><rect x="923" y="14" width="1" height="1.2" fill="#3c3c3c"/><rect x="934" y="14" width="1" height="1.2" fill="#3c3c3c"/><rect x="946" y="14" width="1" height="1.2" fill="#3c3c3c"/><rect x="958" y="14" width="1" height="1.2" fill="#3c3c3c"/><rect x="970" y="10" width="1" height="5.4" fill="#4a4a4a"/><rect x="982" y="14" width="1" height="1.2" fill="#3c3c3c"/><rect x="993" y="14" width="1" height="1.2" fill="#3c3c3c"/><rect x="1005" y="14" width="1" height="1.2" fill="#3c3c3c"/><rect x="1017" y="14" width="1" height="1.2" fill="#3c3c3c"/><rect x="1029" y="12.6" width="1" height="2.6" fill="#4a4a4a"/><rect x="1041" y="14" width="1" height="1.2" fill="#3c3c3c"/><rect x="1053" y="14" width="1" height="1.2" fill="#3c3c3c"/><rect x="1064" y="14" width="1" height="1.2" fill="#3c3c3c"/><rect x="1076" y="14" width="1" height="1.2" fill="#3c3c3c"/><rect x="1088" y="10" width="1" height="5.4" fill="#4a4a4a"/><rect x="1100" y="14" width="1" height="1.2" fill="#3c3c3c"/><rect x="1112" y="14" width="1" height="1.2" fill="#3c3c3c"/><rect x="1123" y="14" width="1" height="1.2" fill="#3c3c3c"/><rect x="1135" y="14" width="1" height="1.2" fill="#3c3c3c"/><rect x="1147" y="12.6" width="1" height="2.6" fill="#4a4a4a"/><rect x="1159" y="14" width="1" height="1.2" fill="#3c3c3c"/><rect x="1171" y="14" width="1" height="1.2" fill="#3c3c3c"/><rect x="1182" y="14" width="1" height="1.2" fill="#3c3c3c"/><rect x="1194" y="14" width="1" height="1.2" fill="#3c3c3c"/><rect x="1206" y="10" width="1" height="5.4" fill="#4a4a4a"/></svg><span class="a t" style="left:56.42px;top:144.6px;font-size:8.6px;color:#6e6e6e;letter-spacing:-0.115px;-webkit-text-stroke:0;">150</span><span class="a t" style="left:174.58px;top:144.6px;font-size:8.6px;color:#6e6e6e;letter-spacing:-0.115px;-webkit-text-stroke:0;">100</span><span class="a t" style="left:295.14px;top:144.6px;font-size:8.6px;color:#6e6e6e;letter-spacing:-0.181px;-webkit-text-stroke:0;">50</span><span class="a t" style="left:415.6px;top:144.6px;font-size:8.6px;color:#6e6e6e;letter-spacing:-0.181px;-webkit-text-stroke:0;">0</span><span class="a t" style="left:531.46px;top:144.6px;font-size:8.6px;color:#6e6e6e;letter-spacing:-0.181px;-webkit-text-stroke:0;">50</span><span class="a t" style="left:647.22px;top:144.6px;font-size:8.6px;color:#6e6e6e;letter-spacing:-0.115px;-webkit-text-stroke:0;">100</span><span class="a t" style="left:765.38px;top:144.6px;font-size:8.6px;color:#6e6e6e;letter-spacing:-0.115px;-webkit-text-stroke:0;">150</span><span class="a t" style="left:883.54px;top:144.6px;font-size:8.6px;color:#6e6e6e;letter-spacing:-0.115px;-webkit-text-stroke:0;">200</span><span class="a t" style="left:1001.7px;top:144.6px;font-size:8.6px;color:#6e6e6e;letter-spacing:-0.115px;-webkit-text-stroke:0;">250</span><span class="a t" style="left:1119.86px;top:144.6px;font-size:8.6px;color:#6e6e6e;letter-spacing:-0.115px;-webkit-text-stroke:0;">300</span><span class="a t" style="left:1207.4px;top:144.8px;font-size:9px;color:#6e6e6e;letter-spacing:0.271px;-webkit-text-stroke:0;">millimeters</span><svg class="a" style="left:653.5px;top:144px;" width="1" height="16" viewBox="0 0 1 16"><path d="M0.5 0 V16" stroke="#222" stroke-width="1" stroke-dasharray="2 2"/></svg><svg class="a" style="left:38px;top:160px;" width="16" height="498" viewBox="0 0 16 498"><rect x="14" y="13" width="1.1" height="1" fill="#3c3c3c"/><rect x="14" y="25" width="1.1" height="1" fill="#3c3c3c"/><rect x="14" y="37" width="1.1" height="1" fill="#3c3c3c"/><rect x="14" y="49" width="1.1" height="1" fill="#3c3c3c"/><rect x="14" y="60" width="1.1" height="1" fill="#3c3c3c"/><rect x="14" y="72" width="1.1" height="1" fill="#3c3c3c"/><rect x="9.6" y="83" width="5.4" height="1" fill="#4a4a4a"/><rect x="14" y="96" width="1.1" height="1" fill="#3c3c3c"/><rect x="14" y="108" width="1.1" height="1" fill="#3c3c3c"/><rect x="14" y="119" width="1.1" height="1" fill="#3c3c3c"/><rect x="14" y="131" width="1.1" height="1" fill="#3c3c3c"/><rect x="14" y="143" width="1.1" height="1" fill="#3c3c3c"/><rect x="14" y="155" width="1.1" height="1" fill="#3c3c3c"/><rect x="14" y="167" width="1.1" height="1" fill="#3c3c3c"/><rect x="14" y="178" width="1.1" height="1" fill="#3c3c3c"/><rect x="14" y="190" width="1.1" height="1" fill="#3c3c3c"/><rect x="9.6" y="202" width="5.4" height="1" fill="#4a4a4a"/><rect x="14" y="214" width="1.1" height="1" fill="#3c3c3c"/><rect x="14" y="226" width="1.1" height="1" fill="#3c3c3c"/><rect x="14" y="237" width="1.1" height="1" fill="#3c3c3c"/><rect x="14" y="249" width="1.1" height="1" fill="#3c3c3c"/><rect x="14" y="261" width="1.1" height="1" fill="#3c3c3c"/><rect x="14" y="273" width="1.1" height="1" fill="#3c3c3c"/><rect x="14" y="285" width="1.1" height="1" fill="#3c3c3c"/><rect x="14" y="296" width="1.1" height="1" fill="#3c3c3c"/><rect x="14" y="308" width="1.1" height="1" fill="#3c3c3c"/><rect x="9.6" y="320" width="5.4" height="1" fill="#4a4a4a"/><rect x="14" y="332" width="1.1" height="1" fill="#3c3c3c"/><rect x="14" y="344" width="1.1" height="1" fill="#3c3c3c"/><rect x="14" y="355" width="1.1" height="1" fill="#3c3c3c"/><rect x="14" y="367" width="1.1" height="1" fill="#3c3c3c"/><rect x="14" y="379" width="1.1" height="1" fill="#3c3c3c"/><rect x="14" y="391" width="1.1" height="1" fill="#3c3c3c"/><rect x="14" y="403" width="1.1" height="1" fill="#3c3c3c"/><rect x="14" y="414" width="1.1" height="1" fill="#3c3c3c"/><rect x="14" y="426" width="1.1" height="1" fill="#3c3c3c"/><rect x="9.6" y="438" width="5.4" height="1" fill="#4a4a4a"/><rect x="14" y="450" width="1.1" height="1" fill="#3c3c3c"/><rect x="14" y="462" width="1.1" height="1" fill="#3c3c3c"/><rect x="14" y="473" width="1.1" height="1" fill="#3c3c3c"/><rect x="14" y="485" width="1.1" height="1" fill="#3c3c3c"/></svg><span class="a t" style="left:38.6px;top:249.1px;font-size:8.6px;color:#6e6e6e;letter-spacing:-0.315px;transform-origin:0 0;transform:rotate(-90deg);-webkit-text-stroke:0;">250</span><span class="a t" style="left:38.6px;top:368.1px;font-size:8.6px;color:#6e6e6e;letter-spacing:-0.315px;transform-origin:0 0;transform:rotate(-90deg);-webkit-text-stroke:0;">200</span><span class="a t" style="left:38.6px;top:486.1px;font-size:8.6px;color:#6e6e6e;letter-spacing:-0.315px;transform-origin:0 0;transform:rotate(-90deg);-webkit-text-stroke:0;">150</span><span class="a t" style="left:38.6px;top:604.1px;font-size:8.6px;color:#6e6e6e;letter-spacing:-0.315px;transform-origin:0 0;transform:rotate(-90deg);-webkit-text-stroke:0;">100</span><svg class="a" style="left:38px;top:492.6px;" width="16" height="1" viewBox="0 0 16 1"><path d="M0 0.5 H16" stroke="#222" stroke-width="1" stroke-dasharray="2 2"/></svg><svg class="a" style="left:0px;top:0px;" width="1280" height="720" viewBox="0 0 1280 720"><path d="M587 329.5 H717 C746.5 329.5 770.5 356 770.5 388.5 C770.5 421.5 746.5 448 717 448 H587 C557.5 448 533.8 421.5 533.8 388.5 C533.8 356 557.5 329.5 587 329.5 Z" fill="none" stroke="#8c8c90" stroke-width="1" /><path d="M587 329.5 H717 C746.5 329.5 770.5 356 770.5 388.5 C770.5 421.5 746.5 448 717 448 H587 C557.5 448 533.8 421.5 533.8 388.5 C533.8 356 557.5 329.5 587 329.5 Z" fill="none" stroke="#161616" stroke-width="1" stroke-dasharray="3.6 2"/><rect x="582.4" y="324" width="10" height="10" fill="#0a0a0a"/><rect x="712.4" y="324" width="10" height="10" fill="#0a0a0a"/><rect x="582.4" y="443" width="10" height="10" fill="#0a0a0a"/><rect x="712.4" y="443" width="10" height="10" fill="#0a0a0a"/><rect x="528.8" y="378" width="10" height="9.7" fill="#0a0a0a"/><rect x="528.8" y="388.7" width="10" height="9.9" fill="#0a0a0a"/><rect x="528.8" y="387.7" width="10" height="1" fill="#e8e8e8"/><rect x="533.4" y="378" width="0.9" height="20.6" fill="#6a6a6a"/><rect x="765" y="378" width="10" height="9.7" fill="#0a0a0a"/><rect x="765" y="388.7" width="10" height="9.9" fill="#0a0a0a"/><rect x="765" y="387.7" width="10" height="1" fill="#e8e8e8"/><rect x="769.6" y="378" width="0.9" height="20.6" fill="#6a6a6a"/></svg><svg class="a" style="left:653px;top:492px;" width="14" height="19" viewBox="0 0 14 19"><path d="M0.8 0.4 L13.4 12.8 L6.4 13.6 L0.8 18.8 Z" fill="#0a0a0a"/></svg><div class="a" style="left:1240px;top:161px;width:15.5px;height:480px;background:#fff;"></div><div class="a" style="left:1240px;top:162px;width:16px;height:16px;background:#efefef;"></div><svg class="a" style="left:1243.6px;top:167px;" width="8" height="5.6" viewBox="0 0 8 5.6"><path d="M0.6 5 L4 1.2 L7.4 5" fill="none" stroke="#222" stroke-width="1.8"/></svg><div class="a" style="left:1240px;top:314.4px;width:15.4px;height:138px;background:#cdcdcd;"></div><div class="a" style="left:1240px;top:625px;width:16px;height:16px;background:#efefef;"></div><svg class="a" style="left:1243.6px;top:630.4px;" width="8" height="5.6" viewBox="0 0 8 5.6"><path d="M0.6 0.6 L4 4.4 L7.4 0.6" fill="none" stroke="#222" stroke-width="1.8"/></svg><svg class="a" style="left:1259.4px;top:125px;" width="14" height="6" viewBox="0 0 14 6"><rect x="0" y="0" width="1" height="1" fill="#a2a2a2"/><rect x="1.6" y="2.2" width="1" height="1" fill="#a2a2a2"/><rect x="0" y="4.4" width="1" height="1" fill="#a2a2a2"/><rect x="3.2" y="0" width="1" height="1" fill="#a2a2a2"/><rect x="4.8" y="2.2" width="1" height="1" fill="#a2a2a2"/><rect x="3.2" y="4.4" width="1" height="1" fill="#a2a2a2"/><rect x="6.4" y="0" width="1" height="1" fill="#a2a2a2"/><rect x="8" y="2.2" width="1" height="1" fill="#a2a2a2"/><rect x="6.4" y="4.4" width="1" height="1" fill="#a2a2a2"/><rect x="9.6" y="0" width="1" height="1" fill="#a2a2a2"/><rect x="11.2" y="2.2" width="1" height="1" fill="#a2a2a2"/><rect x="9.6" y="4.4" width="1" height="1" fill="#a2a2a2"/></svg><svg class="a" style="left:1264px;top:134.6px;" width="4.4" height="7.6" viewBox="0 0 4.4 7.6"><path d="M0 0 V7.6 L4.4 3.8 Z" fill="#111"/></svg><svg class="a" style="left:1262px;top:149px;" width="8" height="8" viewBox="0 0 8 8"><path d="M0.6 7.2 L1 5.6 L5 1.6 L6.4 3 L2.4 7 Z M5.2 0.8 L7.2 2.8" fill="#c4c4c4" stroke="#c4c4c4" stroke-width="0.8"/></svg><svg class="a" style="left:1262px;top:164px;" width="8.4" height="6" viewBox="0 0 8.4 6"><path d="M0.6 5.2 L4.2 1.2 L7.8 5.2" fill="none" stroke="#cfcfcf" stroke-width="1.6"/></svg><svg class="a" style="left:1262px;top:643px;" width="8.4" height="6" viewBox="0 0 8.4 6"><path d="M0.6 0.8 L4.2 4.8 L7.8 0.8" fill="none" stroke="#cfcfcf" stroke-width="1.6"/></svg><svg class="a" style="left:1263px;top:661px;" width="9" height="8" viewBox="0 0 9 8"><path d="M0.5 0.6 L4 4 L0.5 7.4 M4.6 0.6 L8.1 4 L4.6 7.4" fill="none" stroke="#a8a8a8" stroke-width="1"/></svg><div class="a" style="left:1257px;top:177px;width:18px;height:460px;background:#3a3a3a;"></div><div class="a" style="left:1257px;top:194px;width:18px;height:18px;background:#191617;"></div><div class="a" style="left:1258px;top:195px;width:16px;height:16px;background:#231f20;"></div><div class="a" style="left:1257px;top:211px;width:18px;height:18px;background:#2a2a2b;"></div><div class="a" style="left:1258px;top:212px;width:16px;height:16px;background:#3b3b3d;"></div><div class="a" style="left:1257px;top:228px;width:18px;height:18px;background:#3f4041;"></div><div class="a" style="left:1258px;top:229px;width:16px;height:16px;background:#58595b;"></div><div class="a" style="left:1257px;top:245px;width:18px;height:18px;background:#4e4f51;"></div><div class="a" style="left:1258px;top:246px;width:16px;height:16px;background:#6d6e71;"></div><div class="a" style="left:1257px;top:262px;width:18px;height:18px;background:#5c5d5f;"></div><div class="a" style="left:1258px;top:263px;width:16px;height:16px;background:#808285;"></div><div class="a" style="left:1257px;top:279px;width:18px;height:18px;background:#696b6d;"></div><div class="a" style="left:1258px;top:280px;width:16px;height:16px;background:#939598;"></div><div class="a" style="left:1257px;top:381px;width:18px;height:18px;background:#1e2169;"></div><div class="a" style="left:1258px;top:382px;width:16px;height:16px;background:#2b2e93;"></div><div class="a" style="left:1257px;top:398px;width:18px;height:18px;background:#1679a5;"></div><div class="a" style="left:1258px;top:399px;width:16px;height:16px;background:#1fa9e6;"></div><div class="a" style="left:1257px;top:415px;width:18px;height:18px;background:#0c7739;"></div><div class="a" style="left:1258px;top:416px;width:16px;height:16px;background:#12a650;"></div><div class="a" style="left:1257px;top:449px;width:18px;height:18px;background:#a91419;"></div><div class="a" style="left:1258px;top:450px;width:16px;height:16px;background:#ec1c24;"></div><div class="a" style="left:1257px;top:466px;width:18px;height:18px;background:#a90764;"></div><div class="a" style="left:1258px;top:467px;width:16px;height:16px;background:#ec0a8c;"></div><div class="a" style="left:1257px;top:483px;width:18px;height:18px;background:#772967;"></div><div class="a" style="left:1258px;top:484px;width:16px;height:16px;background:#a63a90;"></div><div class="a" style="left:1257px;top:500px;width:18px;height:18px;background:#b05d17;"></div><div class="a" style="left:1258px;top:501px;width:16px;height:16px;background:#f58220;"></div><div class="a" style="left:1257px;top:534px;width:18px;height:18px;background:#5a4c49;"></div><div class="a" style="left:1258px;top:535px;width:16px;height:16px;background:#7e6a66;"></div><div class="a" style="left:1257px;top:585px;width:18px;height:18px;background:#426695;"></div><div class="a" style="left:1258px;top:586px;width:16px;height:16px;background:#5d8ed0;"></div><div class="a" style="left:1257px;top:602px;width:18px;height:18px;background:#4f4683;"></div><div class="a" style="left:1258px;top:603px;width:16px;height:16px;background:#6f62b7;"></div><div class="a" style="left:1257px;top:619px;width:18px;height:18px;background:#5c5280;"></div><div class="a" style="left:1258px;top:620px;width:16px;height:16px;background:#8073b3;"></div><div class="a" style="left:1257px;top:177px;width:18px;height:18px;background:#222;"></div><div class="a" style="left:1258px;top:178px;width:16px;height:16px;background:#fff;"></div><svg class="a" style="left:1258px;top:178px;" width="16" height="16" viewBox="0 0 16 16"><path d="M0.5 0.5 L15.5 15.5 M15.5 0.5 L0.5 15.5" stroke="#111" stroke-width="1"/></svg><div class="a" style="left:1257px;top:296px;width:18px;height:18px;background:#3a3a3a;"></div><div class="a" style="left:1258px;top:297px;width:16px;height:16px;background:#a7a9ac;"></div><div class="a" style="left:1257px;top:313px;width:18px;height:18px;background:#3a3a3a;"></div><div class="a" style="left:1258px;top:314px;width:16px;height:16px;background:#bcbec0;"></div><div class="a" style="left:1257px;top:330px;width:18px;height:18px;background:#3a3a3a;"></div><div class="a" style="left:1258px;top:331px;width:16px;height:16px;background:#d1d3d4;"></div><div class="a" style="left:1257px;top:347px;width:18px;height:18px;background:#3a3a3a;"></div><div class="a" style="left:1258px;top:348px;width:16px;height:16px;background:#e6e7e8;"></div><div class="a" style="left:1257px;top:364px;width:18px;height:18px;background:#3a3a3a;"></div><div class="a" style="left:1258px;top:365px;width:16px;height:16px;background:#ffffff;"></div><div class="a" style="left:1257px;top:432px;width:18px;height:18px;background:#3a3a3a;"></div><div class="a" style="left:1258px;top:433px;width:16px;height:16px;background:#fff100;"></div><div class="a" style="left:1257px;top:517px;width:18px;height:18px;background:#3a3a3a;"></div><div class="a" style="left:1258px;top:518px;width:16px;height:16px;background:#f6adb1;"></div><div class="a" style="left:1257px;top:551px;width:18px;height:18px;background:#3a3a3a;"></div><div class="a" style="left:1258px;top:552px;width:16px;height:16px;background:#cdc8e8;"></div><div class="a" style="left:1257px;top:568px;width:18px;height:18px;background:#3a3a3a;"></div><div class="a" style="left:1258px;top:569px;width:16px;height:16px;background:#9f97d0;"></div><div class="a" style="left:1256.6px;top:585.4px;width:18.8px;height:17.6px;border:1.4px solid #f4f4f4;outline:1px solid #222;outline-offset:-2.6px;"></div><div class="a" style="left:38px;top:641px;width:16px;height:17px;background:#f3f4f4;"></div><svg class="a" style="left:58px;top:645.4px;" width="9" height="9.6" viewBox="0 0 9 9.6"><path d="M2.6 0.6 H8 V9 H0.7 V2.6 Z" fill="#fcfcfc" stroke="#444" stroke-width="1"/><path d="M4.4 3.2 V7.2 M2.4 5.2 H6.4" stroke="#333" stroke-width="1"/></svg><svg class="a" style="left:74px;top:645.4px;" width="10.4" height="8.8" viewBox="0 0 10.4 8.8"><path d="M0.6 0 V8.8" stroke="#b4b4b4" stroke-width="1.2"/><path d="M10 0 V8.8 L3 4.4 Z" fill="#b4b4b4"/></svg><svg class="a" style="left:91.4px;top:645.4px;" width="7.4" height="8.8" viewBox="0 0 7.4 8.8"><path d="M7.2 0 V8.8 L0.2 4.4 Z" fill="#b4b4b4"/></svg><span class="a t" style="left:107px;top:643.2px;font-size:12.4px;color:#111;letter-spacing:0.331px;">1 of 1</span><svg class="a" style="left:149px;top:645.4px;" width="7.4" height="8.8" viewBox="0 0 7.4 8.8"><path d="M0.2 0 V8.8 L7.2 4.4 Z" fill="#b4b4b4"/></svg><svg class="a" style="left:163.6px;top:645.4px;" width="10.4" height="8.8" viewBox="0 0 10.4 8.8"><path d="M9.8 0 V8.8" stroke="#b4b4b4" stroke-width="1.2"/><path d="M0.4 0 V8.8 L7.4 4.4 Z" fill="#b4b4b4"/></svg><svg class="a" style="left:180.4px;top:645.4px;" width="9" height="9.6" viewBox="0 0 9 9.6"><path d="M2.6 0.6 H8 V9 H0.7 V2.6 Z" fill="#fcfcfc" stroke="#444" stroke-width="1"/><path d="M4.4 3.2 V7.2 M2.4 5.2 H6.4" stroke="#333" stroke-width="1"/></svg><svg class="a" style="left:195px;top:640px;" width="72" height="19" viewBox="0 0 72 19"><path d="M0 1.5 H6.2 L11.4 17 H61.2 L66.4 1.5 H72" fill="#fff" stroke="#444" stroke-width="1"/><rect x="6.8" y="0" width="59" height="2" fill="#fff"/></svg><span class="a t" style="left:213.5px;top:642.6px;font-size:12.4px;color:#111;letter-spacing:-0.914px;">Page 1</span><svg class="a" style="left:648.6px;top:644px;" width="6" height="12" viewBox="0 0 6 12"><rect x="0" y="0" width="1" height="1" fill="#9a9a9a"/><rect x="1" y="2" width="1" height="1" fill="#9a9a9a"/><rect x="0" y="4" width="1" height="1" fill="#9a9a9a"/><rect x="1" y="6" width="1" height="1" fill="#9a9a9a"/><rect x="0" y="8" width="1" height="1" fill="#9a9a9a"/><rect x="1" y="10" width="1" height="1" fill="#9a9a9a"/><rect x="2" y="0" width="1" height="1" fill="#9a9a9a"/><rect x="3" y="2" width="1" height="1" fill="#9a9a9a"/><rect x="2" y="4" width="1" height="1" fill="#9a9a9a"/><rect x="3" y="6" width="1" height="1" fill="#9a9a9a"/><rect x="2" y="8" width="1" height="1" fill="#9a9a9a"/><rect x="3" y="10" width="1" height="1" fill="#9a9a9a"/><rect x="4" y="0" width="1" height="1" fill="#9a9a9a"/><rect x="5" y="2" width="1" height="1" fill="#9a9a9a"/><rect x="4" y="4" width="1" height="1" fill="#9a9a9a"/><rect x="5" y="6" width="1" height="1" fill="#9a9a9a"/><rect x="4" y="8" width="1" height="1" fill="#9a9a9a"/><rect x="5" y="10" width="1" height="1" fill="#9a9a9a"/></svg><div class="a" style="left:656px;top:642px;width:1px;height:16px;background:#8a8a8a;"></div><div class="a" style="left:657px;top:642px;width:583px;height:16px;background:#fff;"></div><div class="a" style="left:657px;top:642px;width:17px;height:16px;background:#efefef;"></div><svg class="a" style="left:662px;top:645.4px;" width="6" height="8.4" viewBox="0 0 6 8.4"><path d="M5.2 0.6 L1.2 4.2 L5.2 7.8" fill="none" stroke="#222" stroke-width="1.8"/></svg><div class="a" style="left:677.5px;top:642.4px;width:463px;height:14px;background:#cdcdcd;"></div><div class="a" style="left:1223px;top:642px;width:17px;height:16px;background:#efefef;"></div><svg class="a" style="left:1228px;top:645.4px;" width="6" height="8.4" viewBox="0 0 6 8.4"><path d="M0.8 0.6 L4.8 4.2 L0.8 7.8" fill="none" stroke="#222" stroke-width="1.8"/></svg><div class="a" style="left:1240px;top:641.6px;width:15.6px;height:16.4px;background:#f7f7f7;"></div><svg class="a" style="left:1242px;top:643.6px;" width="12" height="12" viewBox="0 0 12 12"><circle cx="4.8" cy="4.8" r="4.1" fill="#fff" stroke="#222" stroke-width="1.1"/><path d="M7.8 7.8 L11.2 11.2" stroke="#222" stroke-width="1.7"/><path d="M3 3.6 H4 M5.6 3.6 H6.6 M3 6 H4 M5.6 6 H6.6" stroke="#222" stroke-width="1"/></svg><div class="a" style="left:37px;top:658px;width:54px;height:19.4px;background:#fafafa;"></div><div class="a" style="left:37px;top:658px;width:1238px;height:1px;background:#e4e4e4;"></div><svg class="a" style="left:39px;top:661px;" width="6" height="14" viewBox="0 0 6 14"><rect x="0" y="0" width="1" height="1" fill="#9a9a9a"/><rect x="1" y="2" width="1" height="1" fill="#9a9a9a"/><rect x="0" y="4" width="1" height="1" fill="#9a9a9a"/><rect x="1" y="6" width="1" height="1" fill="#9a9a9a"/><rect x="0" y="8" width="1" height="1" fill="#9a9a9a"/><rect x="1" y="10" width="1" height="1" fill="#9a9a9a"/><rect x="0" y="12" width="1" height="1" fill="#9a9a9a"/><rect x="2" y="0" width="1" height="1" fill="#9a9a9a"/><rect x="3" y="2" width="1" height="1" fill="#9a9a9a"/><rect x="2" y="4" width="1" height="1" fill="#9a9a9a"/><rect x="3" y="6" width="1" height="1" fill="#9a9a9a"/><rect x="2" y="8" width="1" height="1" fill="#9a9a9a"/><rect x="3" y="10" width="1" height="1" fill="#9a9a9a"/><rect x="2" y="12" width="1" height="1" fill="#9a9a9a"/><rect x="4" y="0" width="1" height="1" fill="#9a9a9a"/><rect x="5" y="2" width="1" height="1" fill="#9a9a9a"/><rect x="4" y="4" width="1" height="1" fill="#9a9a9a"/><rect x="5" y="6" width="1" height="1" fill="#9a9a9a"/><rect x="4" y="8" width="1" height="1" fill="#9a9a9a"/><rect x="5" y="10" width="1" height="1" fill="#9a9a9a"/><rect x="4" y="12" width="1" height="1" fill="#9a9a9a"/></svg><svg class="a" style="left:50px;top:664px;" width="4.4" height="7.6" viewBox="0 0 4.4 7.6"><path d="M0 0 V7.6 L4.4 3.8 Z" fill="#111"/></svg><svg class="a" style="left:63px;top:664px;" width="7.4" height="7.4" viewBox="0 0 7.4 7.4"><path d="M0.4 7 L0.8 5.4 L4.6 1.6 L5.8 2.8 L2 6.6 Z" fill="#333"/><path d="M4.6 0.8 L6.8 3" stroke="#222" stroke-width="1.5"/></svg><svg class="a" style="left:78.6px;top:663.6px;" width="7" height="8.4" viewBox="0 0 7 8.4"><path d="M6.2 0.6 L1.2 4.2 L6.2 7.8" fill="none" stroke="#cfcfcf" stroke-width="1.6"/></svg><div class="a" style="left:91px;top:659px;width:443px;height:18px;background:#3a3a3a;"></div><div class="a" style="left:125px;top:659px;width:18px;height:18px;background:#782c67;"></div><div class="a" style="left:126px;top:660px;width:16px;height:16px;background:#a83e90;"></div><div class="a" style="left:142px;top:659px;width:18px;height:18px;background:#0c773a;"></div><div class="a" style="left:143px;top:660px;width:16px;height:16px;background:#11a651;"></div><div class="a" style="left:159px;top:659px;width:18px;height:18px;background:#1e2169;"></div><div class="a" style="left:160px;top:660px;width:16px;height:16px;background:#2b2e93;"></div><div class="a" style="left:176px;top:659px;width:18px;height:18px;background:#696b6d;"></div><div class="a" style="left:177px;top:660px;width:16px;height:16px;background:#939598;"></div><div class="a" style="left:210px;top:659px;width:18px;height:18px;background:#0b6ba0;"></div><div class="a" style="left:211px;top:660px;width:16px;height:16px;background:#1095df;"></div><div class="a" style="left:227px;top:659px;width:18px;height:18px;background:#b15f14;"></div><div class="a" style="left:228px;top:660px;width:16px;height:16px;background:#f7851c;"></div><div class="a" style="left:244px;top:659px;width:18px;height:18px;background:#a8391f;"></div><div class="a" style="left:245px;top:660px;width:16px;height:16px;background:#ea502c;"></div><div class="a" style="left:261px;top:659px;width:18px;height:18px;background:#555555;"></div><div class="a" style="left:262px;top:660px;width:16px;height:16px;background:#777777;"></div><div class="a" style="left:278px;top:659px;width:18px;height:18px;background:#454545;"></div><div class="a" style="left:279px;top:660px;width:16px;height:16px;background:#606060;"></div><div class="a" style="left:312px;top:659px;width:18px;height:18px;background:#5b5b5b;"></div><div class="a" style="left:313px;top:660px;width:16px;height:16px;background:#7f7f7f;"></div><div class="a" style="left:363px;top:659px;width:18px;height:18px;background:#a90764;"></div><div class="a" style="left:364px;top:660px;width:16px;height:16px;background:#ec0a8c;"></div><div class="a" style="left:397px;top:659px;width:18px;height:18px;background:#191617;"></div><div class="a" style="left:398px;top:660px;width:16px;height:16px;background:#231f20;"></div><div class="a" style="left:414px;top:659px;width:18px;height:18px;background:#131313;"></div><div class="a" style="left:415px;top:660px;width:16px;height:16px;background:#1b1b1b;"></div><div class="a" style="left:431px;top:659px;width:18px;height:18px;background:#5c5c5c;"></div><div class="a" style="left:432px;top:660px;width:16px;height:16px;background:#808080;"></div><div class="a" style="left:448px;top:659px;width:18px;height:18px;background:#36324a;"></div><div class="a" style="left:449px;top:660px;width:16px;height:16px;background:#4b4668;"></div><div class="a" style="left:465px;top:659px;width:18px;height:18px;background:#455d7a;"></div><div class="a" style="left:466px;top:660px;width:16px;height:16px;background:#6182aa;"></div><div class="a" style="left:482px;top:659px;width:18px;height:18px;background:#1b202b;"></div><div class="a" style="left:483px;top:660px;width:16px;height:16px;background:#262d3d;"></div><div class="a" style="left:499px;top:659px;width:18px;height:18px;background:#3f4041;"></div><div class="a" style="left:500px;top:660px;width:16px;height:16px;background:#58595b;"></div><div class="a" style="left:516px;top:659px;width:18px;height:18px;background:#212121;"></div><div class="a" style="left:517px;top:660px;width:16px;height:16px;background:#2e2e2e;"></div><div class="a" style="left:91px;top:659px;width:18px;height:18px;background:#222;"></div><div class="a" style="left:92px;top:660px;width:16px;height:16px;background:#fff;"></div><svg class="a" style="left:92px;top:660px;" width="16" height="16" viewBox="0 0 16 16"><path d="M0.5 0.5 L15.5 15.5 M15.5 0.5 L0.5 15.5" stroke="#111" stroke-width="1"/></svg><div class="a" style="left:108px;top:659px;width:18px;height:18px;background:#3a3a3a;"></div><div class="a" style="left:109px;top:660px;width:16px;height:16px;background:#d1d3d4;"></div><div class="a" style="left:193px;top:659px;width:18px;height:18px;background:#3a3a3a;"></div><div class="a" style="left:194px;top:660px;width:16px;height:16px;background:#8ed8f8;"></div><div class="a" style="left:295px;top:659px;width:18px;height:18px;background:#3a3a3a;"></div><div class="a" style="left:296px;top:660px;width:16px;height:16px;background:#a7a9aa;"></div><div class="a" style="left:329px;top:659px;width:18px;height:18px;background:#3a3a3a;"></div><div class="a" style="left:330px;top:660px;width:16px;height:16px;background:#ffffff;"></div><div class="a" style="left:346px;top:659px;width:18px;height:18px;background:#3a3a3a;"></div><div class="a" style="left:347px;top:660px;width:16px;height:16px;background:#e6e7e8;"></div><div class="a" style="left:380px;top:659px;width:18px;height:18px;background:#3a3a3a;"></div><div class="a" style="left:381px;top:660px;width:16px;height:16px;background:#ffffff;"></div><svg class="a" style="left:1141px;top:663px;" width="7" height="8.4" viewBox="0 0 7 8.4"><path d="M0.8 0.6 L5.8 4.2 L0.8 7.8" fill="none" stroke="#d4d4d4" stroke-width="1.6"/></svg><svg class="a" style="left:1236px;top:664px;" width="9" height="8" viewBox="0 0 9 8"><path d="M0.5 0.6 L4 4 L0.5 7.4 M4.6 0.6 L8.1 4 L4.6 7.4" fill="none" stroke="#a8a8a8" stroke-width="1"/></svg><div class="a" style="left:1255px;top:641px;width:1px;height:37px;background:#dedede;"></div><svg class="a" style="left:126.6px;top:691.4px;" width="4.4" height="7.6" viewBox="0 0 4.4 7.6"><path d="M0 0 V7.6 L4.4 3.8 Z" fill="#111"/></svg><svg class="a" style="left:818px;top:688px;" width="16" height="16.4" viewBox="0 0 16 16.4"><rect x="0.7" y="0.7" width="14.6" height="11.4" fill="#fff" stroke="#111" stroke-width="1.4"/><rect x="1.8" y="1.8" width="12.4" height="4.6" fill="#e0242b"/><rect x="1.8" y="6.4" width="12.4" height="4.6" fill="#3a9fe0"/><ellipse cx="8" cy="6.4" rx="3.1" ry="2" fill="#fff" stroke="#111" stroke-width="0.9"/><circle cx="8" cy="6.4" r="0.9" fill="#111"/><path d="M4.6 13 H11.4 M2.4 15.4 H13.6" stroke="#111" stroke-width="1.4"/></svg><svg class="a" style="left:852px;top:688px;" width="16.4" height="16" viewBox="0 0 16.4 16"><path d="M6.4 1 L12.6 7.4 L6.8 13.6 L0.8 7.4 Z" fill="#fff" stroke="#111" stroke-width="1.4"/><path d="M7.6 0.4 L14.6 7.8" stroke="#111" stroke-width="2.6"/><path d="M4.2 8.6 H9.4 L6.8 11.4 Z" fill="#c42a2a"/><path d="M16 10.6 V15.6 H11.4 Z" fill="#d42a2a"/></svg><div class="a" style="left:870.4px;top:685.4px;width:21.4px;height:21.2px;background:#fdfdfd;border:1px solid #9c9c9c;"></div><svg class="a" style="left:871.4px;top:686.4px;" width="19.4" height="19.2" viewBox="0 0 19.4 19.2"><path d="M0.4 0.4 L19 18.8 M19 0.4 L0.4 18.8" stroke="#111" stroke-width="1.6"/></svg><div class="a" style="left:1049px;top:685px;width:1px;height:27px;background:#d0d0d0;"></div><svg class="a" style="left:1065.4px;top:689px;" width="9.4" height="14.6" viewBox="0 0 9.4 14.6"><path d="M4.7 0.4 V5 M4.7 0.6 Q1 4.4 0.7 7.4 L3 10.4 H6.4 L8.7 7.4 Q8.4 4.4 4.7 0.6 Z" fill="#fff" stroke="#111" stroke-width="1.1"/><rect x="2.8" y="10.6" width="3.8" height="3.4" fill="#fff" stroke="#111" stroke-width="1.1"/></svg><div class="a" style="left:1077.6px;top:685.6px;width:21px;height:20.4px;background:#231f20;"></div><svg class="a" style="left:0px;top:0px;pointer-events:none;" width="1280" height="720" viewBox="0 0 1280 720"><g opacity="0.66"><circle cx="1007.2" cy="622.2" r="32.2" fill="#eb6f52"/><circle cx="1007.2" cy="622.2" r="29.4" fill="none" stroke="#fff" stroke-width="1.5"/><path d="M989 611.6 Q992.6 609.4 993.6 606 Q998 600 1006.6 600.6 Q1012 598.6 1015.4 603 Q1021.6 606 1022 614 L1021.8 622 Q1024 622.6 1022.6 626.4 Q1021.6 628.6 1020 628.4 Q1017 637 1009.6 642.4 Q1006.4 644.6 1003.6 642 Q996.6 636 994.2 628.4 Q992 628.2 991.6 625 Q991.2 622 993 622 L992.6 614.4 Q991.4 612.4 989 611.6 Z" fill="#fff"/><circle cx="1001.4" cy="625.6" r="3.9" fill="#fff" stroke="#eb6f52" stroke-width="1"/><circle cx="1011" cy="625.6" r="3.9" fill="#fff" stroke="#eb6f52" stroke-width="1"/><circle cx="1001.8" cy="625.4" r="0.9" fill="#eb6f52"/><circle cx="1010.8" cy="625.4" r="0.9" fill="#eb6f52"/><path d="M1005.3 625 H1007.1 M995.6 616.6 Q999.6 613.4 1003.6 616 M1008.6 616 Q1012.6 613.2 1016.8 616.8 M1002.6 633.6 Q1006 635.6 1009.6 633.4 M994 624.6 L997.5 625 M1014.9 625 L1018.6 624.4" fill="none" stroke="#eb6f52" stroke-width="1"/><g font-family="'Liberation Sans', sans-serif" fill="#eb6f52" stroke="#eb6f52" stroke-linejoin="round" stroke-linecap="round"><text x="1047.2" y="649.3" font-size="70.2" stroke-width="4.5" textLength="60.6" lengthAdjust="spacingAndGlyphs">M</text><clipPath id="gclip"><path d="M1100 590 H1140 V660 H1100 V646 H1113.5 V617 H1100 Z"/></clipPath><g clip-path="url(#gclip)"><text transform="translate(1131.6 0) scale(-1 1)" x="0" y="649.1" font-size="67.8" stroke-width="4.5" textLength="28.1" lengthAdjust="spacingAndGlyphs">G</text></g><text x="1115.6" y="650.1" font-size="38.5" stroke-width="4" textLength="110.6" lengthAdjust="spacingAndGlyphs">TUTS</text><text x="1050.3" y="683.3" font-size="30.1" stroke-width="2" textLength="178.1" lengthAdjust="spacingAndGlyphs">mgtuts.com</text></g></g></svg>
</body></html>
